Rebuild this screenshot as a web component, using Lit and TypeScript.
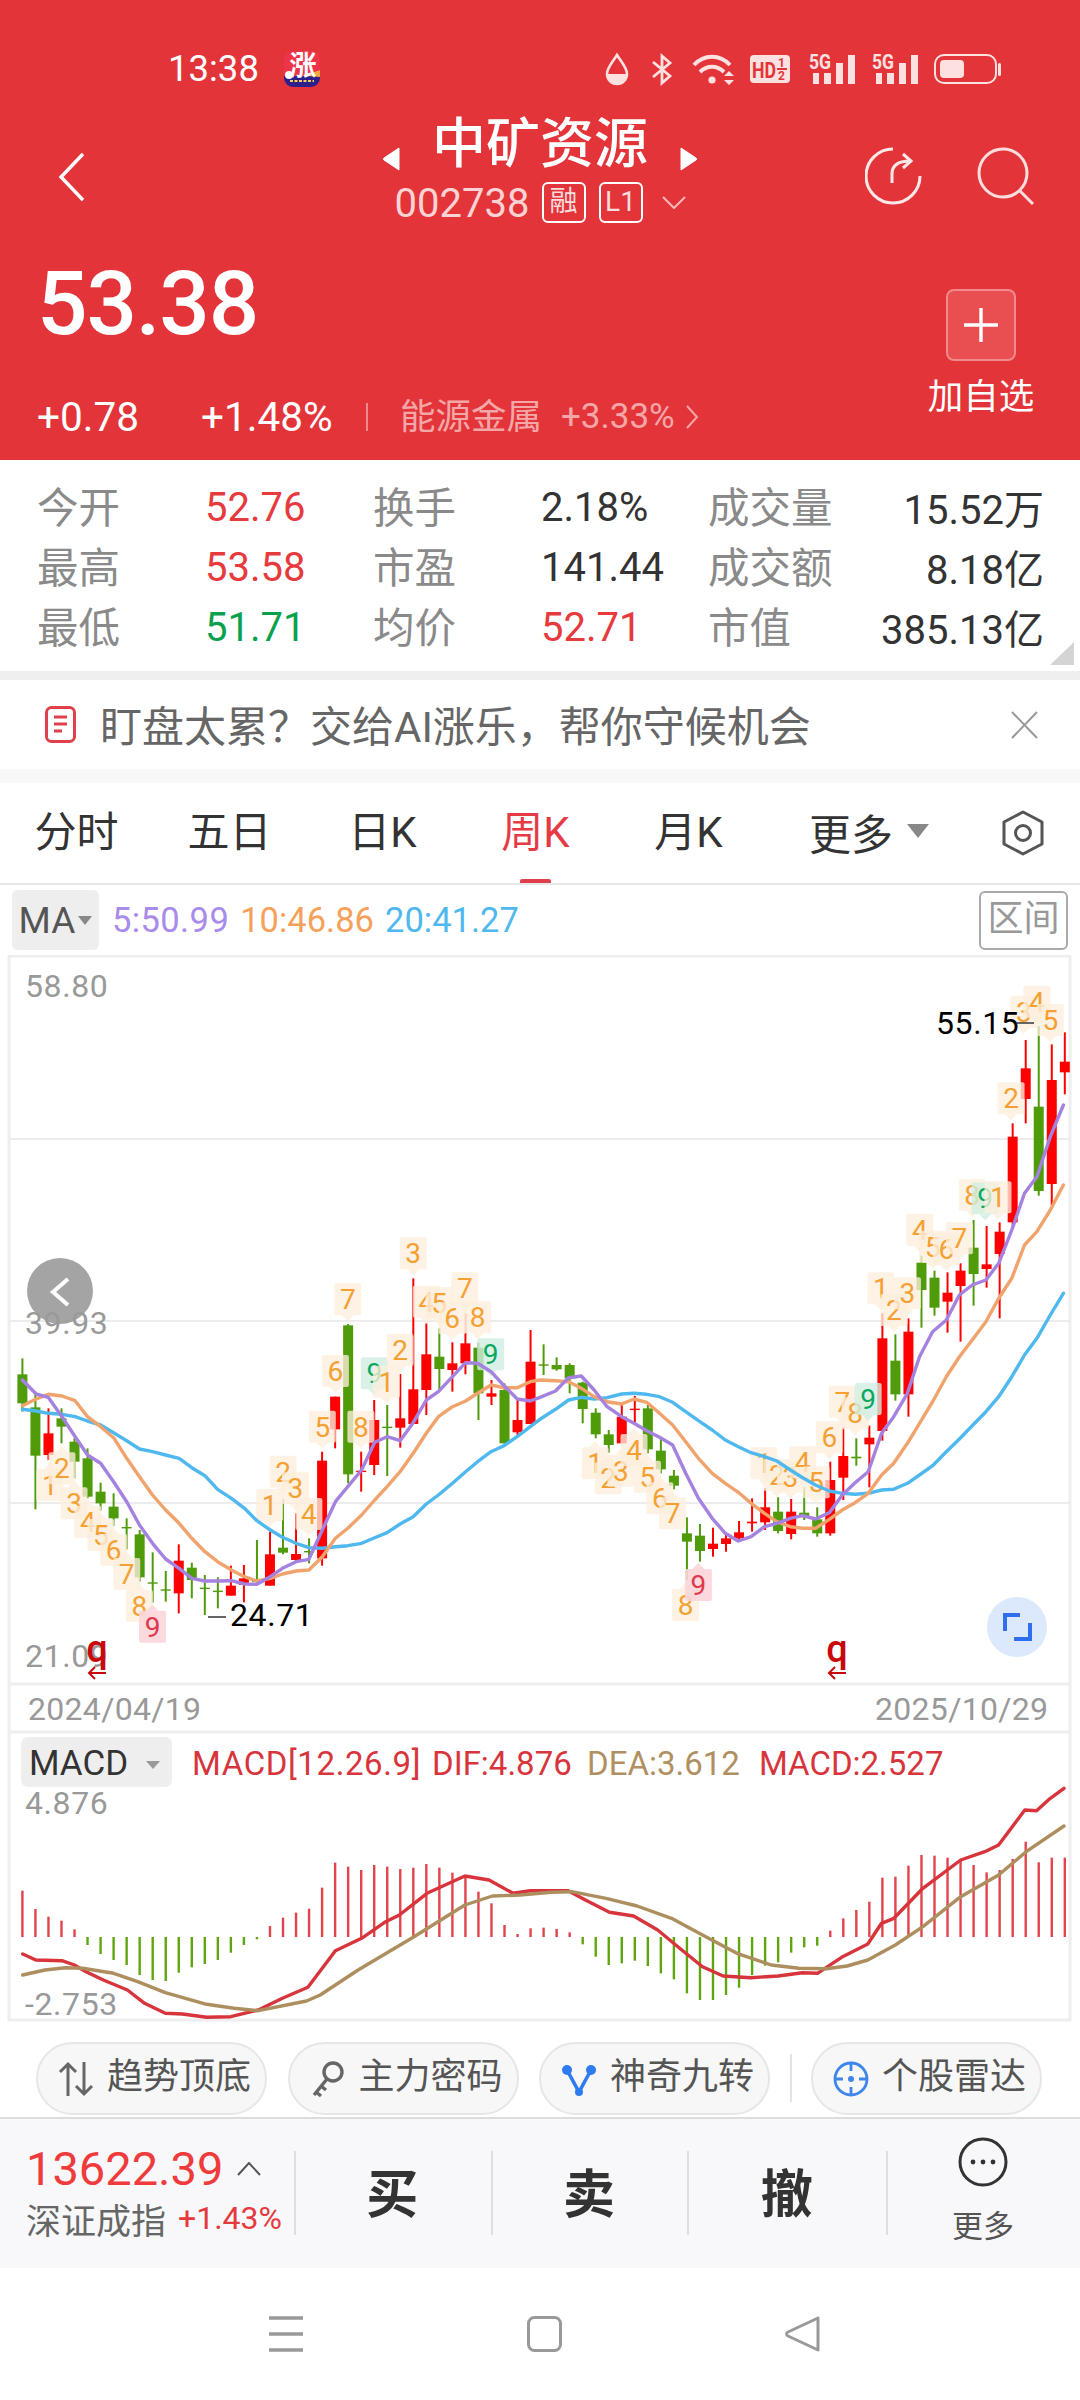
import { LitElement, html, css, svg } from "lit";
import { customElement } from "lit/decorators.js";

type C = [number, number, number, number, number];
// colour flag 1 = up (red), 0 = down (green); values are y in the crop grid: real y = 1200 + v / 3
const CANDLES: C[] = [
  [0,475,523,610,635],[0,575,622,767,928],[1,625,700,765,780],[0,625,655,680,730],[0,715,725,785,835],
  [0,745,775,890,895],[0,848,875,910,932],[0,880,920,955,978],[0,955,981,985,1048],[0,990,1003,1132,1145],
  [0,1057,1147,1150,1208],[0,1113,1168,1172,1205],[1,1033,1082,1180,1240],[0,1088,1103,1140,1195],[0,1125,1163,1167,1245],
  [0,1132,1172,1176,1225],[1,1097,1157,1187,1187],[1,1095,1135,1155,1207],[0,1020,1140,1146,1155],[1,995,1063,1157,1157],
  [0,897,1043,1058,1063],[1,940,1062,1080,1085],[0,1015,1053,1057,1090],[1,755,782,1075,1097],[1,590,590,688,745],
  [0,372,376,823,850],[1,755,812,816,875],[1,600,660,795,825],[0,615,680,684,828],[1,522,655,683,743],
  [1,235,568,672,672],[1,370,463,570,645],[0,385,470,507,575],[1,427,490,510,575],[1,340,430,490,523],
  [0,428,443,580,660],[1,540,580,590,615],[0,550,570,730,730],[1,600,660,697,710],[1,390,485,672,672],
  [0,433,493,497,525],[0,472,495,508,512],[0,490,495,535,580],[0,545,548,627,670],[0,625,638,703,715],
  [0,690,703,735,758],[1,615,650,730,730],[1,588,626,630,670],[0,615,625,748,760],[0,715,752,808,820],
  [0,810,827,857,868],[0,952,1000,1025,1140],[0,972,1007,1053,1085],[1,983,1031,1047,1070],[1,1000,1015,1032,1055],
  [1,963,997,1015,1022],[1,895,965,970,995],[1,865,922,967,990],[0,892,935,993,1000],[1,897,935,1002,1018],
  [0,862,938,948,960],[0,922,958,1000,1010],[1,785,840,1000,1007],[1,682,768,833,900],[0,715,770,775,797],
  [1,677,713,733,862],[1,340,415,693,722],[0,403,482,583,602],[1,355,395,583,650],[0,167,188,270,383],
  [0,212,233,323,347],[1,217,278,305,398],[1,190,212,258,425],[0,60,143,222,317],[1,78,193,207,263],
  [1,67,95,162,355],[1,-230,-190,67,80],[1,-480,-395,-303,-230],[0,-522,-280,-27,-13],[1,-467,-360,-48,15],
  [1,-503,-415,-383,-317],
];
const cx = (i: number) => 22.4 + 13.03 * i;
const cy = (v: number) => 1200 + v / 3;

const PURPLE = [65,540,105,582,140,592,180,650,215,705,254,765,292,790,330,845,368,905,405,975,443,1030,481,1077,520,1105,557,1135,595,1143,632,1143,672,1142,710,1152,746,1153,785,1130,820,1105,860,1085,897,1078,936,990,974,905,1010,860,1050,810,1088,727,1124,710,1162,722,1200,668,1238,600,1273,575,1314,530,1352,488,1387,490,1426,515,1462,555,1502,597,1540,603];
const PURPLE2 = [0,592,45,573,83,533,120,528,157,570,195,620,237,650,273,670,310,692,347,712,385,735,423,820,460,895,500,955,538,1000,576,1023,613,1010,652,980,688,970,727,955,763,947,800,957,840,938,878,885,915,848,953,815,992,700,1027,650,1067,580,1102,470,1140,395,1180,360,1218,285,1255,255,1295,240,1332,190,1370,90,1407,-20,1443,-70,1482,-190,1520,-285];
const ORANGE = [65,617,105,597,140,583,180,588,218,602,254,650,292,680,330,713,368,775,405,830,443,885,481,930,520,970,557,1015,595,1055,632,1085,672,1110,710,1130,746,1143,785,1135,820,1122,860,1113,897,1110,936,1070,974,1015,1010,985,1050,945,1088,900,1124,860,1162,815,1200,760,1238,700,1273,650,1314,620,1352,603,1387,580,1426,555,1462,563,1502,563,1540,545];
const ORANGE2 = [0,540,45,542,83,545,120,565,157,590,195,605,237,612,273,597,310,607,347,640,385,675,423,725,460,775,500,820,538,850,576,877,613,910,652,940,688,965,727,980,763,985,800,985,840,958,878,930,915,908,953,880,992,825,1027,790,1067,730,1102,670,1140,605,1180,530,1218,470,1255,420,1295,365,1332,295,1370,235,1407,135,1443,95,1482,30,1520,-45];
const BLUE = [65,628,105,633,140,640,180,643,218,650,254,663,292,675,330,698,368,722,405,747,443,755,481,765,520,775,557,803,595,827,632,868,672,895,710,925,746,962,785,990,820,1012,860,1030,897,1043,936,1045,974,1040,1010,1037,1050,1030,1088,1013,1124,998,1162,972,1200,950,1238,912,1273,885,1314,850,1352,815,1387,785,1426,755,1462,738,1502,710,1540,680];
const BLUE2 = [0,658,45,628,83,600,120,592,157,597,195,593,237,582,273,580,310,583,347,590,385,607,423,635,460,662,500,690,538,720,576,740,613,758,652,770,688,783,727,810,763,833,800,855,840,873,878,880,915,883,953,880,992,870,1027,868,1067,850,1102,825,1140,797,1180,755,1218,717,1255,677,1295,635,1332,590,1370,530,1407,465,1443,415,1482,345,1520,280];

const DIF = [33,762,52,780,90,782,108,795,125,815,150,840,185,870,210,910,240,940,265,942,300,952,335,950,375,930,410,895,447,862,487,752,525,715,560,665,580,645,620,580,675,528,710,540,745,580,770,572,825,572,850,600,885,637,920,648,955,690,990,750,1020,800,1050,828,1090,833,1130,828,1165,818,1187,820,1222,772,1260,732,1280,670,1298,655,1340,565,1395,480,1430,455,1450,435,1488,330,1505,332,1525,295,1545,265];
const DEA = [33,825,65,810,95,803,120,805,165,820,200,845,240,878,300,913,340,925,375,932,445,903,465,885,520,810,600,712,675,615,715,588,755,585,800,577,830,575,880,595,925,618,975,655,1020,705,1070,760,1120,795,1160,805,1200,806,1230,798,1260,780,1300,735,1340,680,1395,590,1450,525,1490,455,1545,378];

const BAR_A = [632,687,710,722,748,795,822,840,855,885,900,903,878,862,852,840,818,795,778,738,713,698,686,623,548,560,570,555,560,567,563,552,563,578,590,635,670,735,762].map((v) => 1680 + v / 3);
const BAR_B = [685,683,687,697,733,770,795,790,782,798,820,838,880,900,900,885,863,825,797,787,758,742,737,692,655,630,605,533,530,497,465,467,473,480,495,517,510,477,425,487,473,473].map((v) => 1700 + v / 3);
const BARS = [...BAR_A, ...BAR_B];

type M = [string, number, number, number];
const MARK3: M[] = [
  ["1",145,855,1],["2",180,805,1],["3",215,910,1],["4",255,965,1],["5",293,1005,1],["6",330,1050,1],["7",368,1122,1],["8",405,1218,1],["r9",443,1280,1],
  ["1",783,915,0],["2",822,815,0],["3",858,865,0],["4",897,942,0],["5",936,680,0],["6",974,513,0],["7",1010,298,0],["8",1048,680,0],["g9",1087,520,0],
  ["1",1122,545,0],["2",1162,450,0],["3",1200,160,0],["4",1238,305,0],["5",1275,310,0],["6",1313,355,0],["7",1350,265,0],["8",1387,352,0],["g9",1425,463,0],
];
const MARK4: M[] = [
  ["1",160,790,1],["2",198,835,1],["3",235,812,1],["4",273,750,1],["5",312,830,1],["6",348,895,1],["7",385,940,1],["8",423,1215,1],["r9",460,1155,1],
  ["1",650,790,0],["2",688,825,0],["3",727,830,0],["4",763,787,0],["5",802,847,0],["6",840,712,0],["7",878,605,0],["8",915,640,0],["g9",953,597,0],
  ["1",990,265,0],["2",1028,330,0],["3",1067,280,0],["4",1103,90,0],["5",1140,140,0],["6",1180,148,0],["7",1218,115,0],["8",1255,-15,0],["g9",1293,-5,0],
  ["1",1330,-8,0],["2",1368,-305,0],["3",1405,-565,0],["4",1443,-595,0],["5",1482,-540,0],
];

function poly(parts: { p: number[]; ox: number }[]) {
  const out: string[] = [];
  for (const { p, ox } of parts) {
    for (let i = 0; i < p.length; i += 2) {
      out.push(`${(ox + p[i] / 2.904).toFixed(1)},${cy(p[i + 1]).toFixed(1)}`);
    }
  }
  return out.join(" ");
}
function poly6(p: number[]) {
  const out: string[] = [];
  for (let i = 0; i < p.length; i += 2) out.push(`${(p[i] / 1.452).toFixed(1)},${(1700 + p[i + 1] / 3).toFixed(1)}`);
  return out.join(" ");
}

function marker(m: M, ox: number) {
  const [d, zx, zy, up] = m;
  const x = ox + zx / 2.904;
  const y = cy(zy);
  const kind = d[0] === "r" ? "mr" : d[0] === "g" ? "mg" : "mo";
  const digit = d.length > 1 ? d[1] : d;
  const tail = up ? `${x - 6},${y - 16} ${x},${y - 22} ${x + 6},${y - 16}` : `${x - 6},${y + 16} ${x},${y + 22} ${x + 6},${y + 16}`;
  return svg`<g>
    <rect class="${kind}-b" x="${x - 13.5}" y="${y - 16}" width="27" height="32" rx="2"></rect>
    <polygon class="${kind}-b" points="${tail}"></polygon>
    <text class="mark ${kind}-t" x="${x}" y="${y + 10}">${digit}</text>
  </g>`;
}

const sig = html`<svg width="46" height="30" viewBox="0 0 46 30"><text class="five" x="0" y="15" textLength="22" lengthAdjust="spacingAndGlyphs">5G</text><path d="M4 19h6v11H4zM15 19h7v11h-7zM27 9h7v21h-7zM39 1h7v29h-7z" fill="#fde0e0"/></svg>`;

@customElement("app-root")
export class AppRoot extends LitElement {
  static styles = css`
    :host { display: block; width: 1080px; height: 2400px; background: #fff; overflow: hidden; font-family: Roboto, "Noto Sans CJK SC", sans-serif; color: #333; }
    svg { display: block; flex: none; }
    .hd { background: #e33539; height: 460px; color: #fff; display: flex; flex-direction: column; }
    .status { margin-top: 51px; height: 36px; display: flex; align-items: center; padding-left: 168px; padding-right: 79px; }
    .status svg { overflow: visible; }
    .time { font-size: 36.5px; line-height: 36px; width: 116px; color: #fff; }
    .five { font-family: Roboto, sans-serif; font-size: 20px; font-weight: 700; fill: #fde0e0; }
    .hdt { font-family: Roboto, sans-serif; font-weight: 700; fill: #e33539; }
    .appt { font-family: "Noto Sans CJK SC", sans-serif; font-size: 27px; font-weight: 700; fill: #fff; text-anchor: middle; }
    .sicons { margin-left: auto; display: flex; align-items: center; }
    .nav { margin-top: 31px; height: 105px; display: grid; grid-template-columns: 1fr auto 1fr; }
    .back { padding: 34px 0 0 58px; }
    .center { display: flex; flex-direction: column; align-items: center; }
    .title-row { height: 50px; display: flex; align-items: center; gap: 32px; }
    .title-row svg { margin-top: 32px; }
    .title { font-size: 54px; line-height: 50px; font-weight: 500; margin-top: 4px; }
    .code-row { margin-top: 14px; height: 41px; display: flex; align-items: center; }
    .code { font-size: 40px; line-height: 41px; color: #f9d3d3; width: 147px; padding-top: 2px; }
    .badge { box-sizing: border-box; width: 44px; height: 41px; border: 2px solid #fff; border-radius: 6px; font-size: 28px; line-height: 36px; text-align: center; color: #f9dcdc; margin-right: 13px; }
    .right { display: flex; justify-content: flex-end; gap: 54px; padding: 29px 45px 0 0; }
    .quote { flex: 1; display: flex; justify-content: space-between; padding: 0 46px 0 37px; }
    .price { margin: 49px 0 0 0; font-size: 89px; line-height: 64px; font-weight: 500; letter-spacing: -1.2px; }
    .chg { margin-top: 67px; height: 28px; display: flex; align-items: center; font-size: 40.5px; line-height: 28px; }
    .chg .a { width: 164px; }
    .chg .b { width: 165px; }
    .chg .sep { width: 2px; height: 28px; background: #ee8a8c; margin-right: 32px; }
    .chg .c { font-size: 35.5px; color: #f5a7a8; width: 161px; }
    .chg .d { font-size: 35px; color: #f5a7a8; width: 124px; }
    .add { width: 106px; display: flex; flex-direction: column; align-items: center; }
    .plus { margin-top: 66px; box-sizing: border-box; width: 70px; height: 72px; background: #e94e51; border: 2px solid #f08a8c; border-radius: 8px; display: flex; align-items: center; justify-content: center; }
    .addt { margin-top: 21px; font-size: 35.5px; line-height: 31px; white-space: nowrap; }
    .stats { position: relative; box-sizing: border-box; height: 211px; padding: 17px 36px 14px 37px; display: grid; grid-template-columns: 168px 168px 168px 167px 130px 1fr; grid-auto-rows: 60px; align-items: center; font-size: 40px; white-space: nowrap; }
    .lb { color: #8a8a8a; font-size: 41.5px; padding-bottom: 4px; }
    .v { color: #333; }
    .v.r { color: #e63a3e; }
    .v.g { color: #0aa14e; }
    .end { text-align: right; }
    .corner { position: absolute; right: 6px; bottom: 6px; }
    .band1 { height: 9px; background: #efefef; }
    .banner { height: 89px; display: flex; align-items: center; padding-left: 45px; font-size: 42px; color: #666; }
    .banner .txt { margin-left: 24px; width: 911px; white-space: nowrap; padding-bottom: 2px; }
    .band2 { height: 14px; background: #f8f8f8; }
    .tabs { height: 100px; display: flex; align-items: center; font-size: 42px; color: #333; border-bottom: 2px solid #e8e8e8; padding-right: 36px; }
    .tab { width: 153px; height: 100px; line-height: 100px; text-align: center; position: relative; }
    .tab.on { color: #e63a46; }
    .tab.on::after { content: ""; position: absolute; left: 61px; bottom: 0; width: 31px; height: 4px; background: #e0404c; border-radius: 2px 2px 0 0; }
    .more { margin-left: 44px; display: flex; align-items: center; gap: 14px; padding-bottom: 4px; }
    .tabs .hex { margin-left: auto; }
    .mabar { height: 70px; display: flex; align-items: center; padding: 0 12px; font-size: 34.5px; }
    .chip { background: #eee; border-radius: 6px; width: 87px; height: 60px; display: flex; align-items: center; justify-content: center; gap: 3px; font-size: 37px; color: #555; }
    .ma5 { color: #a88bea; margin-left: 13px; letter-spacing: 0.4px; }
    .ma10 { color: #f5a15c; margin-left: 11px; }
    .ma20 { color: #4fb8ee; margin-left: 11px; }
    .range { margin-left: auto; box-sizing: border-box; width: 89px; height: 59px; border: 2px solid #aaa; border-radius: 6px; text-align: center; line-height: 52px; color: #999; font-size: 36px; }
    .ax { font-family: Roboto, sans-serif; font-size: 32px; fill: #999; letter-spacing: 0.6px; }
    .dt { font-family: Roboto, sans-serif; font-size: 32px; fill: #999; letter-spacing: 0.3px; }
    .blk { font-family: Roboto, sans-serif; font-size: 32px; fill: #000; letter-spacing: 0.6px; }
    .mark { font-family: Roboto, sans-serif; font-size: 28px; text-anchor: middle; }
    .mo-b { fill: #fdeedd; fill-opacity: .78; }
    .mo-t { fill: #f5a033; }
    .mg-b { fill: #cfeee0; fill-opacity: .8; }
    .mg-t { fill: #0aa85f; }
    .mr-b { fill: #fbd5d9; fill-opacity: .9; }
    .mr-t { fill: #e0384c; }
    .q { font-family: Roboto, sans-serif; font-size: 38px; font-weight: 500; fill: #c8080c; text-anchor: middle; }
    .macd { font-family: Roboto, sans-serif; font-size: 35px; fill: #333; }
    .mr { font-family: Roboto, sans-serif; font-size: 33px; fill: #d8343c; }
    .mrw { font-family: Roboto, sans-serif; font-size: 33px; fill: #d8343c; letter-spacing: 0.6px; }
    .mt { font-family: Roboto, sans-serif; font-size: 33px; fill: #b09060; }
    .line { fill: none; stroke-width: 3.4; stroke-linejoin: round; stroke-linecap: round; }
    .pills { height: 95px; box-sizing: border-box; padding: 20px 0 2px 36px; display: flex; align-items: flex-start; gap: 20.5px; }
    .pill { box-sizing: border-box; flex: none; width: 231px; height: 73px; padding: 0 0 12px 20px; border: 2px solid #e6e6e6; background: #f7f7f7; border-radius: 37px; display: flex; align-items: center; gap: 13px; font-size: 36px; color: #555; white-space: nowrap; }
    .pill svg { margin-top: 12px; }
    .vsep { width: 2px; height: 48px; background: #e4e4e4; margin: 12px -1px 0 -1px; }
    .foot { height: 149px; border-top: 2px solid #ddd; background: #f8f8fa; display: flex; align-items: flex-start; }
    .idx { box-sizing: border-box; width: 294px; height: 149px; padding: 30px 0 0 26px; }
    .idx1 { display: flex; align-items: center; height: 40px; font-size: 47px; line-height: 40px; color: #ef3b3b; gap: 14px; }
    .idx2 { margin-top: 11px; display: flex; align-items: center; height: 36px; white-space: nowrap; font-size: 35px; color: #666; }
    .idx2 b { font-weight: 400; font-size: 32px; color: #e6393d; margin-left: 12px; }
    .act { position: relative; box-sizing: border-box; width: 197px; height: 149px; padding-bottom: 6px; display: flex; align-items: center; justify-content: center; font-size: 52px; font-weight: 700; color: #333; }
    .act::before { content: ""; position: absolute; left: 0; top: 32px; width: 2px; height: 84px; background: #dedede; }
    .act.m { font-size: 31px; font-weight: 400; color: #555; flex-direction: column; gap: 14px; padding: 0 0 4px; width: 194px; }
    .sysnav { height: 132px; display: flex; align-items: center; }
    .sysnav svg { margin-left: 269px; }
  `;

  private sicons() {
    return html`<div class="sicons">
      <svg width="24" height="33" viewBox="0 0 24 33"><path d="M12 2C7 10 2 15 2 21a10 10 0 0 0 20 0C22 15 17 10 12 2Z" fill="none" stroke="#fde0e0" stroke-width="2.6"/><path d="M2 21h20c0 7-5 11-10 11S2 28 2 21Z" fill="#fde0e0"/></svg>
      <svg style="margin-left:22px" width="21" height="31" viewBox="0 0 21 31"><path d="M2 8l17 14-8 7V2l8 7L2 23" fill="none" stroke="#fde0e0" stroke-width="2.8"/></svg>
      <svg style="margin-left:20px" width="43" height="31" viewBox="0 0 43 31"><g fill="none" stroke="#fde0e0" stroke-width="4"><path d="M2 11C12 0 28 0 38 11"/><path d="M8 18c7-7 17-7 24 0"/></g><circle cx="20" cy="26" r="3.6" fill="#fde0e0"/><path d="M37 17l5 5H32zM37 31l5-5H32z" fill="#fde0e0"/></svg>
      <svg style="margin-left:15px" width="40" height="28" viewBox="0 0 40 28"><rect width="40" height="28" rx="4" fill="#fde0e0"/><text class="hdt" x="2" y="23" font-size="22" textLength="24" lengthAdjust="spacingAndGlyphs">HD</text><text class="hdt" x="28" y="12" font-size="12">1</text><text class="hdt" x="28" y="25" font-size="12">2</text><rect x="27" y="13" width="10" height="2" fill="#e33539"/></svg>
      <div style="margin-left:19px">${sig}</div>
      <div style="margin-left:17px">${sig}</div>
      <svg style="margin-left:16px" width="67" height="30" viewBox="0 0 67 30"><rect x="1" y="1" width="61" height="28" rx="9" fill="none" stroke="#fde0e0" stroke-width="2"/><rect x="6" y="6" width="24" height="18" rx="4" fill="#fde0e0"/><rect x="64" y="9" width="3" height="13" rx="1.5" fill="#fde0e0"/></svg>
    </div>`;
  }

  private chart() {
    const grid = [1139, 1321, 1503];
    return svg`
      <rect x="9" y="956" width="1061" height="1064" fill="none" stroke="#eee" stroke-width="3"></rect>
      ${grid.map((y) => svg`<line x1="10" x2="1070" y1="${y}" y2="${y}" stroke="#ececec" stroke-width="2"></line>`)}
      <line x1="10" x2="1070" y1="1684" y2="1684" stroke="#eee" stroke-width="3"></line>
      <line x1="10" x2="1070" y1="1732" y2="1732" stroke="#eee" stroke-width="3"></line>

      ${CANDLES.map((c, i) => {
        const col = c[0] ? "#ff0000" : "#4f9b0a";
        const x = cx(i);
        const t = cy(c[2]);
        return svg`<line x1="${x}" x2="${x}" y1="${cy(c[1])}" y2="${cy(c[4])}" stroke="${col}" stroke-width="2"></line>
          <rect x="${x - 5}" y="${t}" width="10" height="${Math.max(cy(c[3]) - t, 1.4)}" fill="${col}"></rect>`;
      })}
      ${MARK3.map((m) => marker(m, 0))}
      ${MARK4.map((m) => marker(m, 540))}

      <polyline class="line" stroke="#4fb8ee" points="${poly([{ p: BLUE, ox: 0 }, { p: BLUE2, ox: 540 }])}"></polyline>
      <polyline class="line" stroke="#f0a36c" points="${poly([{ p: ORANGE, ox: 0 }, { p: ORANGE2, ox: 540 }])}"></polyline>
      <polyline class="line" stroke="#a582e0" points="${poly([{ p: PURPLE, ox: 0 }, { p: PURPLE2, ox: 540 }])}"></polyline>

      <text class="ax" x="25" y="997">58.80</text>
      <text class="ax" x="25" y="1334">39.93</text>
      <circle cx="60" cy="1291" r="33" fill="#9a9a9a" fill-opacity=".9"></circle>
      <path d="M68 1279l-15 13 15 13" fill="none" stroke="#fff" stroke-width="4"></path>
      <text class="ax" x="25" y="1667">21.09</text>
      <text class="q" x="97" y="1662">q</text>
      <path d="M106 1673H89M95 1667l-6 6 6 6" fill="none" stroke="#c8080c" stroke-width="2"></path>
      <text class="q" x="837" y="1662">q</text>
      <path d="M846 1673H829M835 1667l-6 6 6 6" fill="none" stroke="#c8080c" stroke-width="2"></path>
      <line x1="208" x2="226" y1="1617" y2="1617" stroke="#666" stroke-width="2"></line>
      <text class="blk" x="230" y="1626">24.71</text>
      <text class="blk" x="936" y="1034">55.15</text>
      <line x1="1017" x2="1034" y1="1023" y2="1023" stroke="#666" stroke-width="2"></line>

      <circle cx="1017" cy="1627" r="30" fill="#dce8fb"></circle>
      <path d="M1020 1615h-15v16M1014 1639h16v-16" fill="none" stroke="#2f6fed" stroke-width="4"></path>

      <text class="dt" x="28" y="1720">2024/04/19</text>
      <text class="dt" x="875" y="1720">2025/10/29</text>

      <rect x="21" y="1737" width="151" height="50" rx="7" fill="#eee"></rect>
      <text class="macd" x="29" y="1775">MACD</text>
      <path d="M146 1761h14l-7 8z" fill="#999"></path>
      <text class="mrw" x="192" y="1775">MACD[12.26.9]</text>
      <text class="mr" x="432" y="1775">DIF:4.876</text>
      <text class="mt" x="587" y="1775">DEA:3.612</text>
      <text class="mr" x="759" y="1775">MACD:2.527</text>
      <text class="ax" x="25" y="1814">4.876</text>

      ${BARS.map((y, i) => {
        const x = cx(i);
        const up = y < 1937;
        return svg`<line x1="${x}" x2="${x}" y1="${y}" y2="${1937}" stroke="${up ? "#e2444c" : "#5fa50e"}" stroke-width="2.4"></line>`;
      })}
      <polyline class="line" stroke="#d8343c" points="${poly6(DIF)}"></polyline>
      <polyline class="line" stroke="#ad8e5e" points="${poly6(DEA)}"></polyline>
      <text class="ax" x="25" y="2015">-2.753</text>
    `;
  }

  render() {
    return html`
      <div class="hd">
        <div class="status">
          <span class="time">13:38</span>
          <svg width="36" height="36" viewBox="0 0 36 36">
            <defs><clipPath id="appclip"><rect width="36" height="36" rx="9"/></clipPath></defs>
            <g clip-path="url(#appclip)">
              <rect width="36" height="36" fill="#ee3449"/>
              <rect y="25" width="36" height="11" fill="#2f1f8a"/>
              <circle cx="5" cy="24" r="4" fill="#fff"/>
              <path d="M24 25c3-4 8-4 12-6v7z" fill="#f7a83a"/>
              <path d="M6 30h24" stroke="#f5d060" stroke-width="2" stroke-dasharray="3 1.5"/>
            </g>
            <text class="appt" x="19" y="24">涨</text>
          </svg>
          ${this.sicons()}
        </div>
        <div class="nav">
          <div class="back"><svg width="28" height="50" viewBox="0 0 28 50"><path d="M25 2L3 25l22 23" fill="none" stroke="#fff" stroke-width="3.4"/></svg></div>
          <div class="center">
            <div class="title-row">
              <svg width="18" height="26" viewBox="0 0 18 26"><path d="M17 2v22L2 14c-1-1-1-1 0-2z" fill="#fff" stroke="#fff" stroke-linejoin="round"/></svg>
              <span class="title">中矿资源</span>
              <svg width="18" height="26" viewBox="0 0 18 26"><path d="M1 2v22l15-10c1-1 1-1 0-2z" fill="#fff" stroke="#fff" stroke-linejoin="round"/></svg>
            </div>
            <div class="code-row">
              <span class="code">002738</span>
              <span class="badge">融</span>
              <span class="badge">L1</span>
              <svg width="24" height="13" viewBox="0 0 24 13" style="margin-left:6px"><path d="M1 1l11 11L23 1" fill="none" stroke="#f7b9ba" stroke-width="2"/></svg>
            </div>
          </div>
          <div class="right">
            <svg width="58" height="58" viewBox="0 0 58 58"><path d="M28 2A27 27 0 1 0 55 29" fill="none" stroke="#fde8e8" stroke-width="3"/><path d="M27 36V27Q27 14 45 14M38 7l8 7-8 7" fill="none" stroke="#fde8e8" stroke-width="3"/></svg>
            <svg width="58" height="58" viewBox="0 0 58 58"><circle cx="26" cy="26" r="24" fill="none" stroke="#fcdcdc" stroke-width="3"/><path d="M43 44l13 13" stroke="#fcdcdc" stroke-width="3"/></svg>
          </div>
        </div>
        <div class="quote">
          <div>
            <div class="price">53.38</div>
            <div class="chg">
              <span class="a">+0.78</span><span class="b">+1.48%</span><span class="sep"></span>
              <span class="c">能源金属</span><span class="d">+3.33%</span>
              <svg width="14" height="26" viewBox="0 0 14 26"><path d="M2 2l10 11L2 24" fill="none" stroke="#f5a7a8" stroke-width="2"/></svg>
            </div>
          </div>
          <div class="add">
            <div class="plus"><svg width="36" height="36" viewBox="0 0 36 36"><path d="M18 1v34M1 18h34" stroke="#fff" stroke-width="3.4"/></svg></div>
            <div class="addt">加自选</div>
          </div>
        </div>
      </div>

      <div class="stats">
        <span class="lb">今开</span><span class="v r">52.76</span><span class="lb">换手</span><span class="v">2.18%</span><span class="lb">成交量</span><span class="v end">15.52万</span>
        <span class="lb">最高</span><span class="v r">53.58</span><span class="lb">市盈</span><span class="v">141.44</span><span class="lb">成交额</span><span class="v end">8.18亿</span>
        <span class="lb">最低</span><span class="v g">51.71</span><span class="lb">均价</span><span class="v r">52.71</span><span class="lb">市值</span><span class="v end">385.13亿</span>
        <svg class="corner" width="24" height="23" viewBox="0 0 24 23"><path d="M24 0v23H0z" fill="#d4d4d4"/></svg>
      </div>
      <div class="band1"></div>
      <div class="banner">
        <svg width="31" height="37" viewBox="0 0 31 37"><rect x="1.5" y="1.5" width="28" height="34" rx="5" fill="none" stroke="#e0404a" stroke-width="3"/><path d="M9 11h13M9 18h13M9 25h8" stroke="#e0404a" stroke-width="3"/></svg>
        <span class="txt">盯盘太累？交给AI涨乐，帮你守候机会</span>
        <svg width="27" height="28" viewBox="0 0 27 28"><path d="M1 1l25 26M26 1L1 27" stroke="#999" stroke-width="2"/></svg>
      </div>
      <div class="band2"></div>
      <div class="tabs">
        <div class="tab">分时</div><div class="tab">五日</div><div class="tab">日K</div><div class="tab on">周K</div><div class="tab">月K</div>
        <div class="more">更多<svg width="22" height="14" viewBox="0 0 22 14"><path d="M0 0h22L11 14z" fill="#888"/></svg></div>
        <svg class="hex" width="42" height="46" viewBox="0 0 42 46"><path d="M21 2l19 10v22L21 44 2 34V12z" fill="none" stroke="#555" stroke-width="3" stroke-linejoin="round"/><circle cx="21" cy="23" r="7.5" fill="none" stroke="#555" stroke-width="3"/></svg>
      </div>
      <div class="mabar">
        <div class="chip">MA<svg width="14" height="9" viewBox="0 0 14 9"><path d="M0 0h14L7 9z" fill="#888"/></svg></div>
        <span class="ma5">5:50.99</span><span class="ma10">10:46.86</span><span class="ma20">20:41.27</span>
        <span class="range">区间</span>
      </div>
      <svg width="1080" height="1067" viewBox="0 955 1080 1067">${this.chart()}</svg>
      <div class="pills">
        <div class="pill"><svg width="36" height="38" viewBox="0 0 36 38"><path d="M10 36V4M2 12l8-8 8 8" fill="none" stroke="#666" stroke-width="3"/><path d="M26 2v32M18 26l8 8 8-8" fill="none" stroke="#666" stroke-width="3"/></svg>趋势顶底</div>
        <div class="pill"><svg width="36" height="38" viewBox="0 0 36 38"><circle cx="23" cy="12" r="9" fill="none" stroke="#666" stroke-width="3.4"/><path d="M17 19L4 35M6 32l5 4M11 26l5 4" fill="none" stroke="#666" stroke-width="3.4"/></svg>主力密码</div>
        <div class="pill"><svg width="36" height="36" viewBox="0 0 36 36"><path d="M6 9l12 22L30 9" fill="none" stroke="#2f7bf0" stroke-width="3.6"/><circle cx="6" cy="9" r="5" fill="#2f7bf0"/><circle cx="30" cy="9" r="5" fill="#2f7bf0"/><circle cx="18" cy="31" r="4" fill="#2f7bf0"/></svg>神奇九转</div>
        <div class="vsep"></div>
        <div class="pill"><svg width="36" height="38" viewBox="0 0 36 38"><circle cx="18" cy="19" r="16" fill="none" stroke="#3f86ea" stroke-width="2.8"/><circle cx="18" cy="19" r="3" fill="#3f86ea"/><path d="M18 3v8M18 27v8M2 19h8M26 19h8" stroke="#3f86ea" stroke-width="2.8"/></svg>个股雷达</div>
      </div>
      <div class="foot">
        <div class="idx">
          <div class="idx1">13622.39<svg width="24" height="14" viewBox="0 0 24 14"><path d="M1 13L12 1l11 12" fill="none" stroke="#555" stroke-width="2"/></svg></div>
          <div class="idx2">深证成指<b>+1.43%</b></div>
        </div>
        <div class="act">买</div><div class="act">卖</div><div class="act" style="width:199px">撤</div>
        <div class="act m">
          <svg width="50" height="50" viewBox="0 0 50 50"><circle cx="25" cy="25" r="23" fill="none" stroke="#333" stroke-width="3"/><circle cx="15" cy="25" r="2.4" fill="#333"/><circle cx="25" cy="25" r="2.4" fill="#333"/><circle cx="35" cy="25" r="2.4" fill="#333"/></svg>
          <span>更多</span>
        </div>
      </div>
      <div class="sysnav">
        <svg width="34" height="36" viewBox="0 0 34 36"><path d="M0 2h34M0 18h34M0 34h34" stroke="#999" stroke-width="3.4"/></svg>
        <svg style="margin-left:224px" width="35" height="36" viewBox="0 0 35 36"><rect x="1.5" y="1.5" width="32" height="33" rx="6" fill="none" stroke="#999" stroke-width="3"/></svg>
        <svg style="margin-left:223px" width="35" height="36" viewBox="0 0 35 36"><path d="M33 2v32L3 20c-2-1-2-3 0-4z" fill="none" stroke="#999" stroke-width="3" stroke-linejoin="round"/></svg>
      </div>
    `;
  }
}
